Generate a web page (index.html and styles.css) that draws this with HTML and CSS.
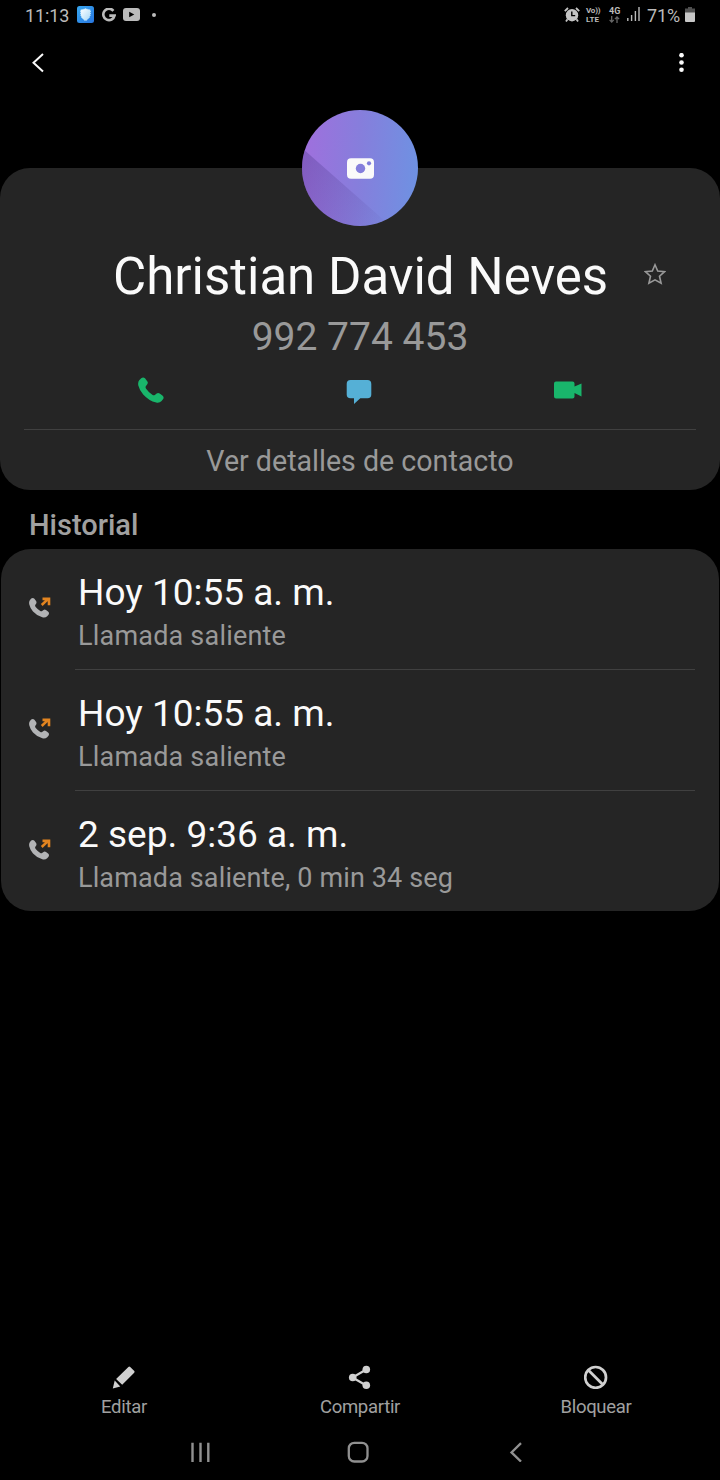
FILE: index.html
```html
<!DOCTYPE html>
<html lang="es">
<head>
<meta charset="utf-8">
<title>Contacto</title>
<link rel="stylesheet" href="styles.css">
</head>
<body>
<svg class="defs" aria-hidden="true">
  <symbol id="handset" viewBox="0 0 26 26"><path d="M1.2 3.2 3.2 1.2Q5.2-.3 7 1.3L9.4 4.4Q10.4 6.1 9.1 7.5L7.8 9.3Q7.2 10.4 8.1 11.8Q10.6 15.4 14.3 17.8Q15.8 18.7 16.8 18L18.7 16.5Q20.2 15.5 21.7 16.6L24.4 18.6Q26.5 20.2 25 22.3L23.6 24Q21.5 26.2 18.2 25.5Q10.8 23.7 5.2 17.4Q1.4 13 .3 8.5Q-.3 5.2 1.2 3.2Z"/></symbol>
  <symbol id="outgoing" viewBox="0 0 22 22">
    <path fill="#b2b3b5" d="M.8 3.2 2.2 1.6Q4 .5 5.4 1.8L7.1 4Q8 5.6 6.9 6.9L6.2 8.1Q5.9 9 6.7 10Q8.8 12.5 11.3 14Q12.2 14.5 13.1 14L14.5 12.9Q15.8 12.2 17 13L19 14.6Q20.7 16 19.5 17.7L18.2 19.2Q16.3 20.9 13.3 20.2Q8.3 19 4 14.4Q1.2 11.2.3 7.4Q-.3 4.9.8 3.2Z"/>
    <path d="M12.7 8 19.2 1.9M13.5 1.9H20V8.3" fill="none" stroke="#e28420" stroke-width="2.6"/>
  </symbol>
</svg>

<header class="status">
  <span class="clock">11:13</span>
  <svg class="shield" width="17" height="17" viewBox="0 0 17 17"><defs><linearGradient id="sh" x2="1" y2="1"><stop stop-color="#38a8f0"/><stop offset="1" stop-color="#2875df"/></linearGradient><linearGradient id="si" x2="1" y2="1"><stop stop-color="#ffffff"/><stop offset="1" stop-color="#a7d8f7"/></linearGradient></defs><rect width="17" height="17" rx="2.5" fill="url(#sh)"/><path d="M8.5 2.8 13.3 4V8Q13.3 12 8.5 14.7Q3.7 12 3.7 8V4Z" fill="url(#si)" stroke="#c9edff" stroke-dasharray="1 1"/></svg>
  <svg class="google" width="14" height="14" viewBox="0 0 14 14"><path d="M11.4 2.8A5.7 5.7 0 1 0 12.6 7.6H7.3" fill="none" stroke="#bbb" stroke-width="2.6"/></svg>
  <svg class="tube" width="17" height="13" viewBox="0 0 17 13"><rect width="17" height="13" rx="3" fill="#bbb"/><path d="M6.2 3.7 11.3 6.5 6.2 9.3Z" fill="#000"/></svg>
  <i class="dot"></i>
  <span class="spacer"></span>
  <svg class="alarm" width="16" height="16" viewBox="0 0 16 16"><circle cx="8" cy="8.2" r="6.2" fill="#c4c4c4"/><path d="M.8 4.2 4 1M15.2 4.2 12 1M3.5 12.2 2 14.5M12.5 12.2 14 14.5" stroke="#c4c4c4" stroke-width="1.8"/><path d="M7.8 4.5V8.6H11.2" fill="none" stroke="#000" stroke-width="1.4"/></svg>
  <span class="volte"><span>Vo))</span><span>LTE</span></span>
  <span class="network"><span>4G</span><svg width="11" height="7" viewBox="0 0 11 7"><path d="M2.7 0V6M.6 3.9 2.7 6 4.8 3.9M8 7V1M5.9 3.1 8 1 10.1 3.1" fill="none" stroke="#666" stroke-width="1.3"/></svg></span>
  <svg class="signal" width="13" height="15" viewBox="0 0 13 15"><path d="M.8 14V11M4.6 14V8M8.4 14V4M12 14V0" stroke="#bbb" stroke-width="1.4"/></svg>
  <span class="percent">71%</span>
  <svg class="battery" width="10" height="15" viewBox="0 0 10 15"><path d="M3 0H7V1.5H10V6H0V1.5H3Z" fill="#505050"/><path d="M0 5.5H10V14Q10 15 9 15H1Q0 15 0 14Z" fill="#c7c7c7"/></svg>
</header>

<nav class="topbar">
  <svg width="12" height="20" viewBox="0 0 12 20"><path d="M11 .9 1.5 9.7 11 18.5" fill="none" stroke="#fafafa" stroke-width="2"/></svg>
  <svg width="6" height="20" viewBox="0 0 6 20" fill="#fafafa"><circle cx="3.5" cy="2.2" r="2.3"/><circle cx="3.5" cy="9.5" r="2.3"/><circle cx="3.5" cy="16.8" r="2.3"/></svg>
</nav>

<main>
  <section class="profile">
    <div class="avatar">
      <svg width="116" height="116" viewBox="0 0 116 116"><defs><linearGradient id="av" x1="0" y1=".3" x2="1" y2=".36"><stop stop-color="#a06fdd"/><stop offset=".5" stop-color="#867edc"/><stop offset="1" stop-color="#6f91e2"/></linearGradient><linearGradient id="fold" gradientUnits="userSpaceOnUse" x1="0" y1="60" x2="84" y2="112"><stop stop-color="#503c90" stop-opacity=".36"/><stop offset="1" stop-color="#503c90" stop-opacity=".03"/></linearGradient><clipPath id="round"><circle cx="58" cy="58" r="58"/></clipPath></defs><g clip-path="url(#round)"><path fill="url(#av)" d="M0 0H116V116H0Z"/><path fill="url(#fold)" d="M0 38 84 112V116H0Z"/></g><rect x="45" y="48.3" width="27" height="20.5" rx="4" fill="#fafafa"/><circle cx="58.5" cy="58.5" r="4.7" fill="#857fdc"/><circle cx="67" cy="53.3" r="2.1" fill="#817fdb"/></svg>
    </div>
    <div class="name-row"><h1>Christian David Neves</h1><svg class="star" width="22" height="22" viewBox="0 0 22 22"><path d="M11 1.8 13.7 8 20.6 8.6 15.5 13.2 17.1 20.2 11 16.8 4.9 20.2 6.5 13.2 1.4 8.6 8.3 8Z" fill="none" stroke="#999" stroke-width="1.6"/></svg></div>
    <p class="phone">992 774 453</p>
    <div class="actions">
      <svg width="26" height="26" fill="#19b56b"><use href="#handset"/></svg>
      <svg class="chat" width="26" height="24" viewBox="0 0 26 24"><path d="M4.5 0H21.5Q25.3 0 25.3 4V14.5Q25.3 18.3 21.5 18.3H14.3L8 24V18.3H4.5Q.7 18.3.7 14.5V4Q.7 0 4.5 0Z" fill="#55b0d6"/></svg>
      <svg class="video" width="28" height="18" viewBox="0 0 28 18"><path d="M2 .5H18.5Q20.5.5 20.5 2.5V5.6L27.5 2.4V15.5L20.5 12V15.5Q20.5 17.5 18.5 17.5H2Q0 17.5 0 15.5V2.5Q0 .5 2 .5Z" fill="#19b56b"/></svg>
    </div>
    <div class="details">Ver detalles de contacto</div>
  </section>

  <h2>Historial</h2>
  <section class="history">
    <article class="call"><svg class="call-icon" width="22" height="22"><use href="#outgoing"/></svg><div class="call-text"><h3>Hoy 10:55 a. m.</h3><p>Llamada saliente</p></div></article>
    <article class="call"><svg class="call-icon" width="22" height="22"><use href="#outgoing"/></svg><div class="call-text"><h3>Hoy 10:55 a. m.</h3><p>Llamada saliente</p></div></article>
    <article class="call"><svg class="call-icon" width="22" height="22"><use href="#outgoing"/></svg><div class="call-text"><h3>2 sep. 9:36 a. m.</h3><p class="timed">Llamada saliente, 0 min 34 seg</p></div></article>
  </section>
</main>

<footer class="toolbar">
  <div class="tool"><svg width="24" height="24" viewBox="0 0 24 24" fill="#d0d0d0"><path d="M16.4 1.9Q17.2 1 18.2 1.9L22.3 6Q23 6.9 22.2 7.7L10.2 19.8 4.1 13.9ZM2.7 15.6 8.3 21.4.8 23.4Z"/></svg><span>Editar</span></div>
  <div class="tool"><svg width="24" height="24" viewBox="0 0 24 24"><path d="M18.3 4.5 4.5 12.5 18.3 20.5" fill="none" stroke="#d0d0d0" stroke-width="2.2"/><g fill="#d0d0d0"><circle cx="18.3" cy="4.5" r="3.8"/><circle cx="4.7" cy="12.5" r="3.8"/><circle cx="18.3" cy="20.2" r="3.8"/></g></svg><span>Compartir</span></div>
  <div class="tool"><svg width="24" height="24" viewBox="0 0 24 24" fill="none" stroke="#d0d0d0" stroke-width="2.7"><circle cx="11.6" cy="12.4" r="10.4"/><path d="M4.2 5 19 19.8"/></svg><span>Bloquear</span></div>
</footer>
<nav class="system">
  <svg width="20" height="20" viewBox="0 0 20 20"><path d="M2.5 .8V20M10.5 .8V20M18.3 .8V20" stroke="#909090" stroke-width="2.4"/></svg>
  <svg class="home" width="22" height="22" viewBox="0 0 22 22"><rect x="1.8" y="1.8" width="18.7" height="18.7" rx="5.5" fill="none" stroke="#909090" stroke-width="2.3"/></svg>
  <svg width="13" height="20" viewBox="0 0 13 20"><path d="M12 1.2 2.5 10.4 12 19.6" fill="none" stroke="#909090" stroke-width="2.3"/></svg>
</nav>
</body>
</html>
```
FILE: styles.css
```css
* { box-sizing: border-box; }
body { margin: 0; height: 1480px; background: #000; color: #fafafa; font-family: Roboto, sans-serif; display: flex; flex-direction: column; overflow: hidden; }
h1, h2, h3, p { margin: 0; font-weight: 400; white-space: nowrap; }
svg { display: block; flex: none; }
.defs { display: none; }
.status { height: 30px; padding: 0 25px; display: flex; align-items: center; color: #bbb; font-size: 18px; line-height: 30px; }
.clock { width: 52px; padding-top: 2px; letter-spacing: -0.1px; }
.shield { margin: -1px 8px 0 0; }
.google { margin: -1px 7px 0 0; }
.tube { margin: -1px 13px 0 0; }
.dot { width: 4px; height: 4px; margin: -1px 0 0 -1px; border-radius: 50%; background: #bbb; }
.spacer { flex: 1; }
.alarm { margin: -1px 6px 0 0; }
.volte { width: 23px; display: flex; flex-direction: column; font-size: 8px; line-height: 9px; font-weight: 700; }
.volte span:first-child { letter-spacing: -0.2px; }
.network { width: 18px; margin-top: -1px; display: flex; flex-direction: column; font-size: 9px; line-height: 9px; font-weight: 700; }
.signal { margin: -1px 7px 0 0; }
.percent { width: 38px; padding-top: 2px; letter-spacing: -0.1px; }
.battery { margin-top: -1px; }
.topbar { height: 66px; padding: 0 36px 0 32px; display: flex; justify-content: space-between; align-items: center; }
main { flex: 1; padding-top: 72px; }
.profile { height: 322px; background: #252525; border-radius: 30px; display: flex; flex-direction: column; align-items: center; }
.avatar { height: 116px; margin-top: -58px; }
.name-row { width: 100%; height: 60px; margin-top: 21px; display: grid; grid-template-columns: 113px 1fr 54px 22px 54px; align-items: center; }
h1 { grid-column: 2 / 4; font-size: 51px; line-height: 60px; }
.star { grid-column: 4; margin-bottom: 6px; }
.phone { height: 46px; margin-top: 7px; font-size: 39px; line-height: 46px; color: #999; }
.actions { width: 100%; height: 69px; padding: 4px 138px 0 137.5px; display: flex; justify-content: space-between; align-items: flex-start; }
.actions svg { margin-top: 12.5px; }
.actions .chat { margin-top: 16px; }
.actions .video { margin-top: 16.5px; }
.details { width: 672px; height: 61px; border-top: 1px solid #404040; text-align: center; font-size: 28.6px; line-height: 62px; color: #999; }
h2 { height: 59px; padding-left: 29px; font-size: 29px; font-weight: 500; line-height: 71px; color: #a0a0a0; }
.history { margin: 0 1px; height: 362px; border-radius: 30px; background: #252525; }
.call { height: 121px; padding: 0 24px 0 28px; display: grid; grid-template-columns: 46px 1fr; }
.call-icon { margin-top: 48px; }
.call-text { padding: 22px 0 0 3px; border-bottom: 1px solid #404040; }
.call:last-child .call-text { border-bottom: 0; }
h3 { font-size: 37px; line-height: 44px; }
.call p { margin-top: 5px; font-size: 27px; line-height: 32px; letter-spacing: 0.2px; color: #999; }
.call .timed { letter-spacing: 0.13px; }
.toolbar { height: 65px; padding: 0 6px; display: grid; grid-template-columns: repeat(3, 236px); }
.tool { display: flex; flex-direction: column; align-items: center; font-size: 18.5px; line-height: 22px; letter-spacing: -0.3px; color: #a0a0a0; }
.tool span { margin-top: 7px; }
.system { height: 50px; padding-left: 190px; display: flex; align-items: flex-start; padding-top: 12px; }
.system .home { margin: -1px 140px 0 137px; }
```
